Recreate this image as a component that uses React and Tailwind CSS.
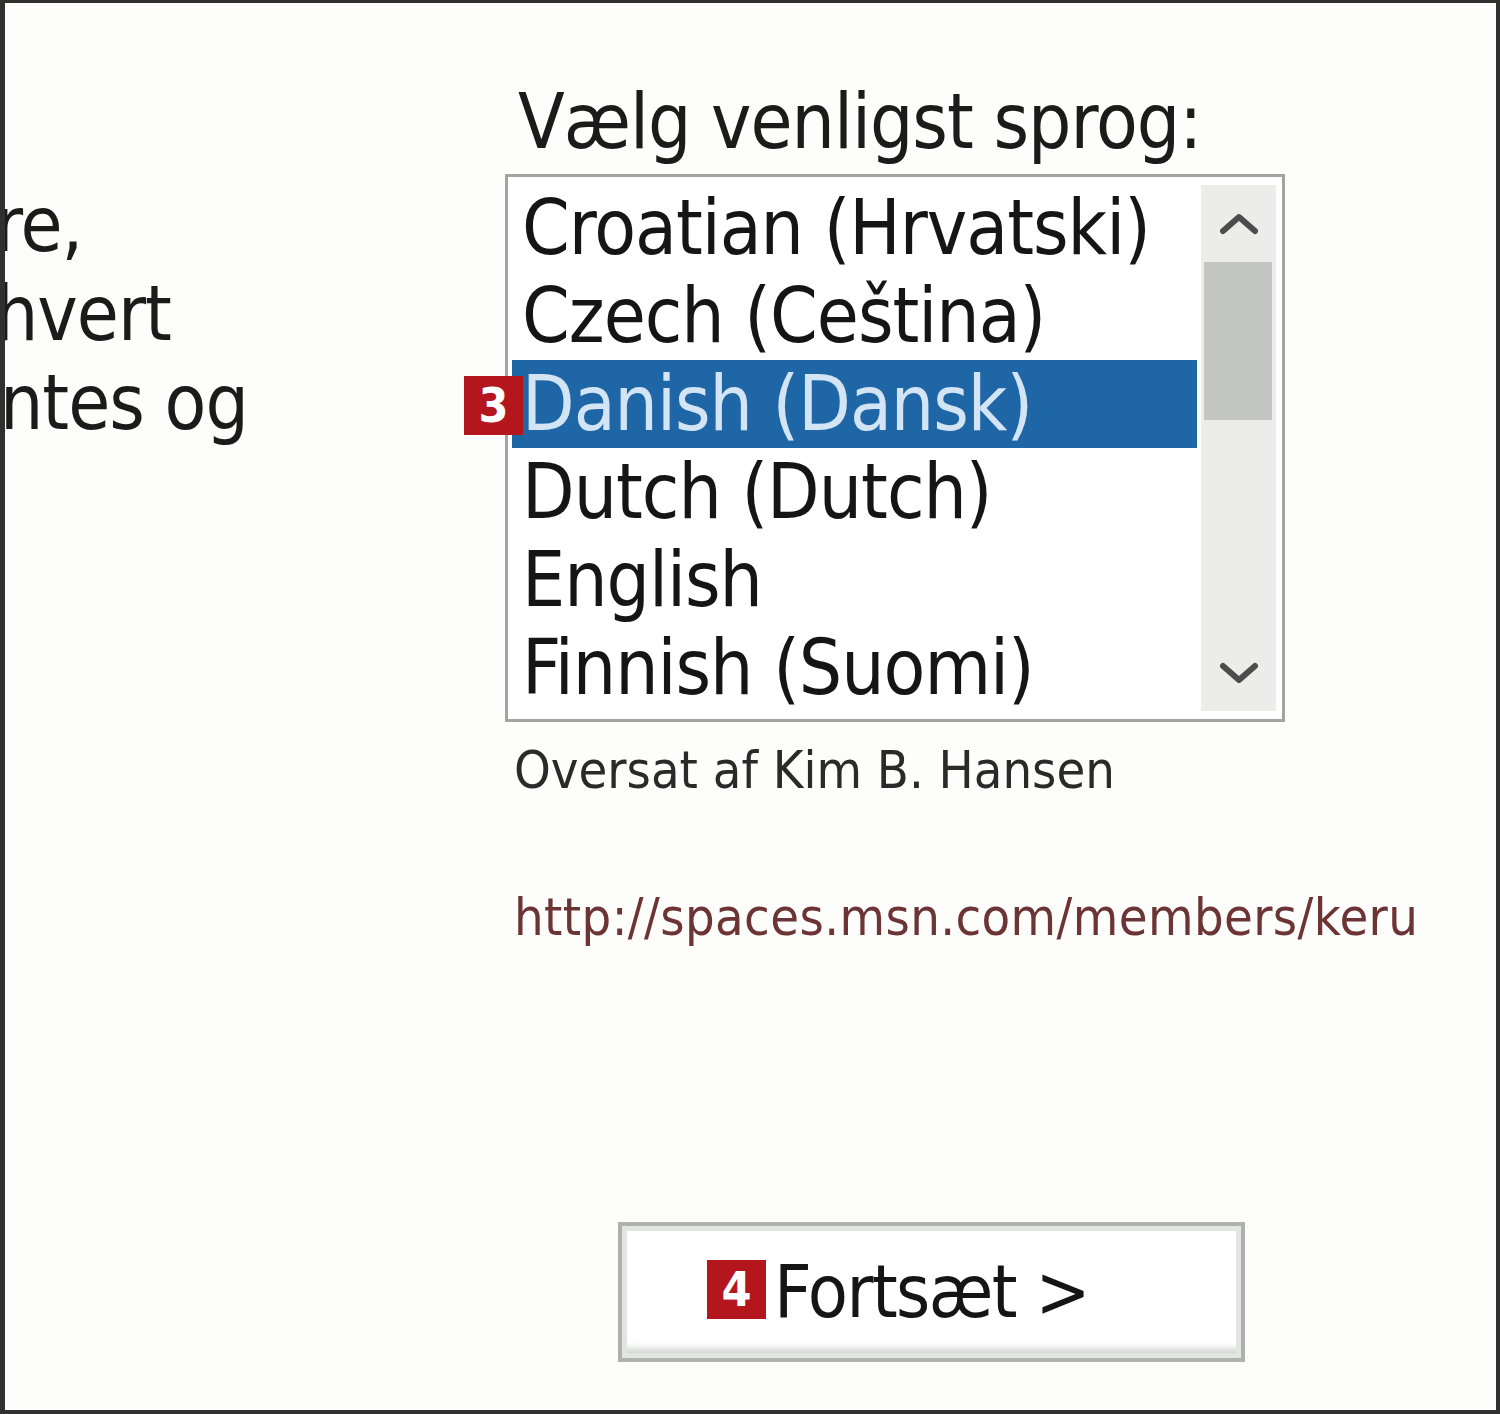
import React from 'react';

const LANGUAGES = [
  'Croatian (Hrvatski)',
  'Czech (Ceština)',
  'Danish (Dansk)',
  'Dutch (Dutch)',
  'English',
  'Finnish (Suomi)',
];

const SELECTED = 'Danish (Dansk)';

const Badge = ({ n, className }) => (
  <span
    className={`absolute w-[59px] h-[59px] bg-[#b3161d] text-white font-bold text-[48px] leading-[59px] text-center tracking-normal ${className}`}
  >
    {n}
  </span>
);

const Chevron = ({ down }) => (
  <svg width="40" height="24" viewBox="0 0 40 24" fill="none">
    <polyline
      points={down ? '4,5 20,19 36,5' : '4,19 20,5 36,19'}
      stroke="#4d4d4d"
      strokeWidth="6"
      strokeLinecap="round"
      strokeLinejoin="round"
    />
  </svg>
);

export default function App() {
  return (
    <div className="w-[1500px] h-[1414px] flex overflow-hidden bg-[#fdfdfb] border-[#303030] border-t-[3px] border-l-[5px] border-r-[4px] border-b-[4px] font-['DejaVu_Sans_Condensed','DejaVu_Sans',sans-serif] text-[#1b1b1b]">
      {/* left: paragraph that runs off the left edge of the frame */}
      <div className="w-[500px] shrink-0 pt-[177px] overflow-hidden text-[76px] leading-[89px] tracking-[-1px] whitespace-nowrap">
        <p className="-ml-[10px]">re,</p>
        <p className="-ml-[10px]">hvert</p>
        <p className="-ml-[5px]">ntes og</p>
      </div>

      {/* right: language chooser */}
      <div className="flex flex-col pt-[75px]">
        <h1 className="ml-[13px] text-[76px] leading-[88px] tracking-[-1px] whitespace-nowrap">
          Vælg venligst sprog:
        </h1>

        <div className="relative mt-[8px] w-[780px] h-[548px] flex bg-white border-[3px] border-[#a3a5a3]">
          <Badge n="3" className="-left-[44px] top-[199px] z-10" />
          <div className="w-[691px] shrink-0 pl-[4px] pr-[2px] pt-[7px] overflow-hidden">
            {LANGUAGES.map((lang) => {
              const active = lang === SELECTED;
              return (
                <div
                  key={lang}
                  className={`h-[88px] pl-[10px] text-[76px] leading-[88px] tracking-[-1px] whitespace-nowrap ${active ? 'bg-[#1f66a6] text-[#d3e5f4]' : 'text-[#151515]'}`}
                >
                  {lang}
                </div>
              );
            })}
          </div>

          <div className="w-[83px] shrink-0 pl-[2px] pr-[6px] py-[8px]">
            <div className="h-full flex flex-col bg-[#ececea]">
              <div className="h-[77px] flex items-center justify-center">
                <Chevron />
              </div>
              <div className="h-[158px] ml-[3px] mr-[4px] bg-[#c3c5c3]" />
              <div className="flex-1" />
              <div className="h-[76px] flex items-center justify-center">
                <Chevron down />
              </div>
            </div>
          </div>
        </div>

        <p className="mt-[18px] ml-[9px] text-[52px] leading-[60px] text-[#2a2a2a] whitespace-nowrap">
          Oversat af Kim B. Hansen
        </p>
        <p className="mt-[87px] ml-[9px] text-[52px] leading-[60px] tracking-[0.4px] text-[#6c3434] whitespace-nowrap">
          http://spaces.msn.com/members/keru
        </p>

        <button className="relative mt-[275px] ml-[113px] w-[627px] h-[140px] flex items-center justify-center bg-white border-[4px] border-[#aeb2ae] shadow-[inset_0_0_0_5px_#e3e5e3,inset_0_-14px_10px_-6px_#c4c8c4] text-[73px] tracking-[-1.5px] text-[#151515]">
          <Badge n="4" className="left-[85px] top-[34px]" />
          Fortsæt &gt;
        </button>
      </div>
    </div>
  );
}
